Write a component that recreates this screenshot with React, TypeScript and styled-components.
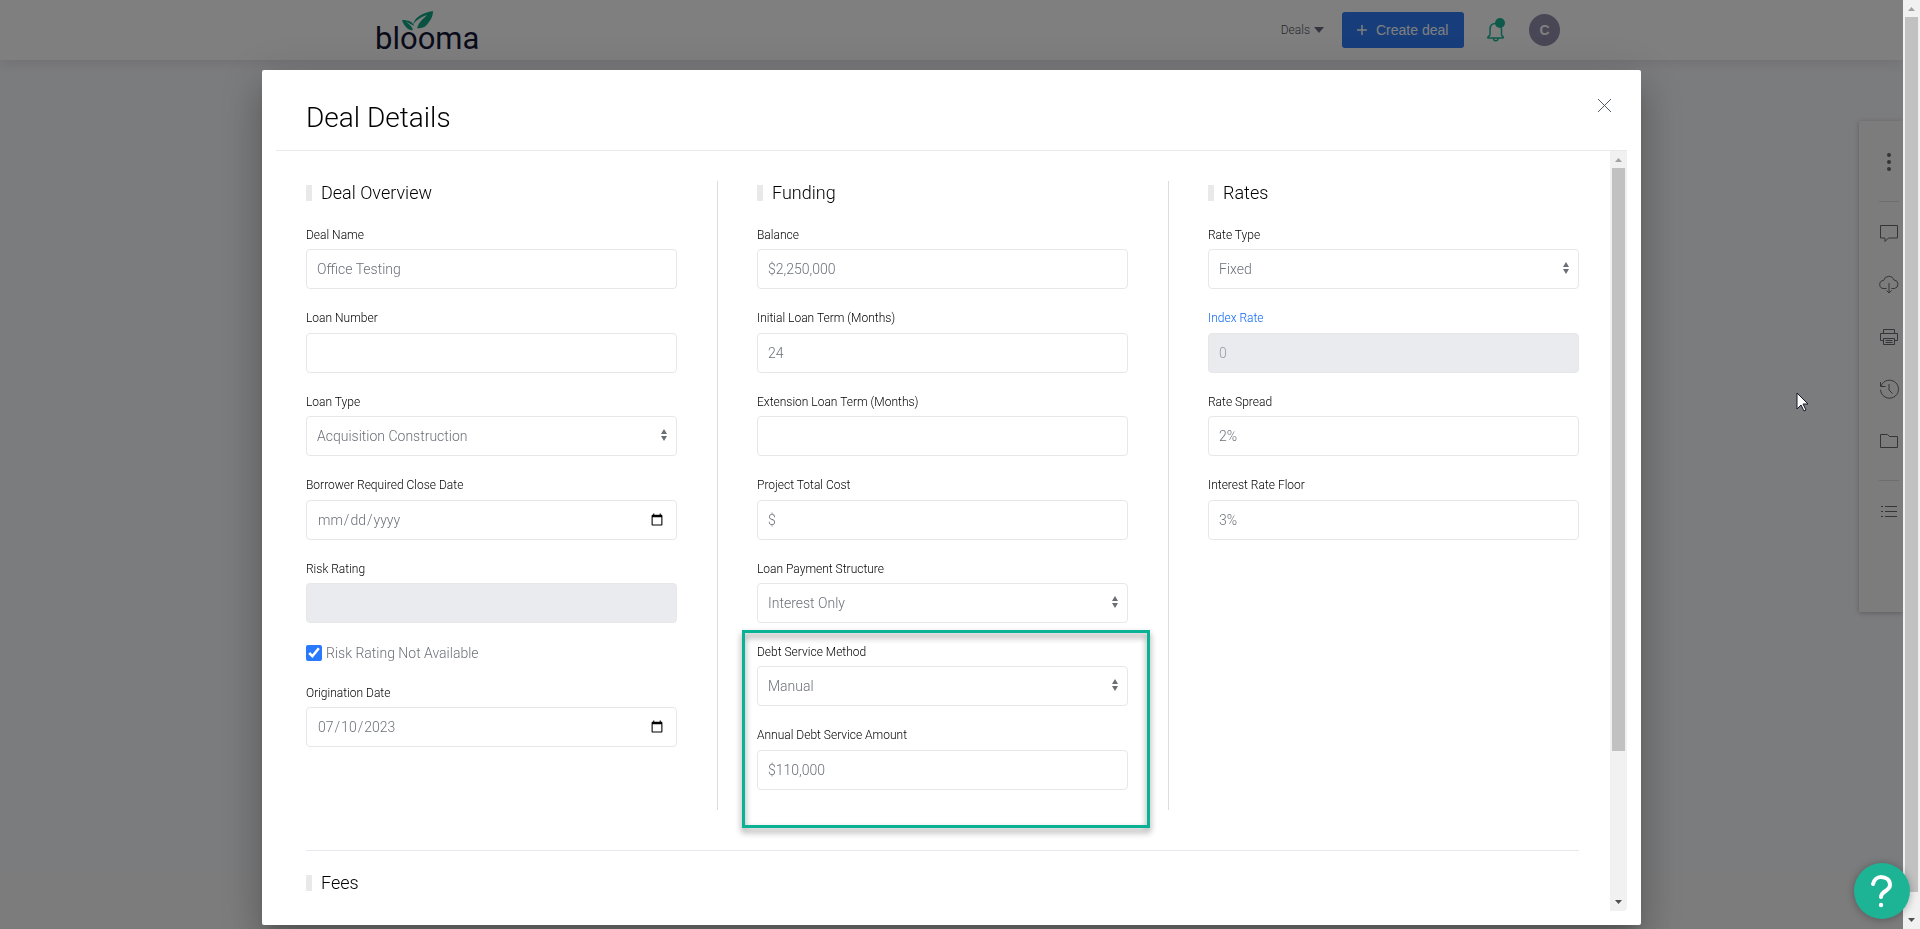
import React, { useId } from 'react';
import styled, { createGlobalStyle } from 'styled-components';

const GlobalStyle = createGlobalStyle`
  * { box-sizing: border-box; }
  body {
    margin: 0;
    background: #f7f8fb;
    color: #000;
    font-family: Roboto, "Liberation Sans", sans-serif;
    font-weight: 300;
    overflow: hidden;
  }
`;

const Shell = styled.div`
  display: flex;
  height: 100vh;
`;

const Page = styled.div`
  flex: 1;
  min-width: 0;
  display: flex;
  flex-direction: column;
`;

const TopBar = styled.header`
  height: 60px;
  background: #fff;
  box-shadow: 0 1px 12px rgba(60, 60, 90, 0.16);
`;

const TopBarInner = styled.div`
  max-width: 1217px;
  height: 60px;
  margin: 0 auto;
  padding-left: 32px;
  display: flex;
  align-items: center;
`;

const Logo = styled.a`
  position: relative;
  margin-right: auto;
  color: #141735;
  font-family: Roboto, "Liberation Sans", sans-serif;
  font-size: 31px;
  line-height: 36px;
  font-weight: 400;
  text-decoration: none;
  padding-top: 18px;

  svg {
    position: absolute;
    left: 27px;
    top: 7px;
  }
`;

const NavMenu = styled.button`
  display: flex;
  align-items: center;
  gap: 4px;
  border: 0;
  padding: 0;
  margin-right: 18px;
  background: none;
  color: #55555e;
  font: 300 12px Roboto, sans-serif;
`;

const CreateButton = styled.button`
  display: flex;
  align-items: center;
  gap: 9px;
  width: 122px;
  height: 36px;
  padding: 0 15px;
  border: 0;
  border-radius: 3px;
  background: #2e7af6;
  color: #fff;
  font: 400 14px "Liberation Sans", sans-serif;
  white-space: nowrap;
`;

const BellButton = styled.button`
  border: 0;
  padding: 0;
  margin: 0 24px 0 23px;
  width: 18px;
  height: 24px;
  background: none;
`;

const Avatar = styled.button`
  width: 31px;
  height: 32px;
  border: 0;
  padding: 0;
  border-radius: 50%;
  background: #928eaa;
  color: #fff;
  font: 700 14px "Liberation Sans", sans-serif;
`;

const Main = styled.main`
  flex: 1;
  display: flex;
  justify-content: flex-end;
  align-items: flex-start;
  padding-top: 61px;
`;

const ToolRail = styled.nav`
  width: 44px;
  height: 491px;
  padding: 31px 4px 0 20px;
  display: flex;
  flex-direction: column;
  gap: 31px;
  background: #f9f9f9;
  box-shadow: 0 1px 5px rgba(40, 40, 60, 0.3);
`;

const RailGroup = styled.div`
  display: flex;
  flex-direction: column;
  gap: 32px;

  & + & {
    border-top: 1px solid #dcdce2;
    padding-top: 21px;
    margin-top: -2px;
  }
`;

const RailButton = styled.button`
  width: 20px;
  height: 20px;
  border: 0;
  padding: 0;
  background: none;

  svg { display: block; }
`;

const Footer = styled.footer`
  height: 57px;
  background: #f8f8f8;
`;

const Overlay = styled.div`
  position: fixed;
  inset: 0 17px 0 0;
  display: flex;
  justify-content: center;
  align-items: flex-start;
  padding: 70px 24px 4px;
  background: rgba(0, 0, 0, 0.5);
`;

const Dialog = styled.section`
  display: flex;
  flex-direction: column;
  width: 100%;
  max-width: 1379px;
  height: 100%;
  padding: 0 14px 14px;
  border-radius: 2px;
  background: #fff;
  box-shadow: 0 11px 15px -7px rgba(0, 0, 0, 0.2), 0 24px 38px 3px rgba(0, 0, 0, 0.14),
    0 9px 46px 8px rgba(0, 0, 0, 0.12);
`;

const DialogHeader = styled.header`
  display: flex;
  justify-content: space-between;
  align-items: flex-start;
  height: 81px;
  padding: 28px 14px 0 30px;
  border-bottom: 1px solid #e9e9e9;
`;

const DialogTitle = styled.h1`
  margin: 0;
  font-size: 28px;
  line-height: 40px;
  font-weight: 300;
`;

const CloseButton = styled.button`
  width: 16px;
  height: 16px;
  border: 0;
  padding: 0;
  background: none;

  svg { display: block; }
`;

const DialogBody = styled.div`
  flex: 1;
  min-height: 0;
  display: flex;
`;

const ScrollArea = styled.div`
  flex: 1;
  min-width: 0;
  overflow-y: auto;
  scrollbar-width: none;
  padding: 30px 31px 30px 30px;
`;

const Columns = styled.div`
  display: flex;
  gap: 40px;
`;

const Column = styled.section`
  flex: 1;
  min-width: 0;
  display: flex;
  flex-direction: column;
  gap: 22px;
  padding-bottom: 20px;
`;

const ColumnRule = styled.div`
  width: 1px;
  margin-right: -1px;
  background: #dcdcdc;
`;

const SectionRule = styled.hr`
  margin: 40px 0 20px;
  border: 0;
  border-top: 1px solid #e7e7ee;
`;

const SectionTitle = styled.h2`
  display: flex;
  align-items: center;
  gap: 9px;
  margin: 0 0 1px;
  font-size: 18px;
  line-height: 24px;
  font-weight: 300;

  &::before {
    content: "";
    width: 6px;
    height: 16px;
    background: #e9e9e9;
  }
`;

const FieldBox = styled.div`
  display: flex;
  flex-direction: column;
  gap: 7px;
`;

const Label = styled.label<{ $link?: boolean }>`
  font-size: 12px;
  line-height: 1.2;
  color: ${(p) => (p.$link ? '#0d68f5' : '#000')};
`;

const TextInput = styled.input`
  width: 100%;
  height: 40px;
  padding: 0 10px;
  border: 1px solid #e7e7ea;
  border-radius: 4px;
  background: #fff;
  color: #6c7079;
  font: 300 14px Roboto, sans-serif;
  outline: 0;

  &:disabled {
    background: #eaebef;
    color: #989ba3;
  }
`;

const SelectBox = styled.div`
  position: relative;

  svg {
    position: absolute;
    right: 10px;
    top: 13px;
    pointer-events: none;
  }
`;

const SelectInput = styled(TextInput).attrs({ as: 'select' })`
  appearance: none;
`;

const CheckRow = styled.label`
  display: flex;
  align-items: center;
  gap: 4px;
  height: 16px;
  margin-bottom: 3px;
  color: #6c7079;
  font-size: 14px;
  line-height: 16px;

  input {
    width: 16px;
    height: 16px;
    margin: 0;
    accent-color: #2979ff;
  }
`;

const Highlight = styled.div`
  position: relative;
  display: flex;
  flex-direction: column;
  gap: 22px;

  &::after {
    content: "";
    position: absolute;
    inset: -15px -22px -38px -15px;
    border: 3px solid #09b294;
    filter: drop-shadow(0 4px 3px rgba(0, 0, 0, 0.45));
    pointer-events: none;
  }
`;

const Track = styled.div<{ $end: number }>`
  width: 17px;
  flex: none;
  display: flex;
  flex-direction: column;
  align-items: center;
  background: #f1f1f1;
  border-bottom-right-radius: ${(p) => p.$end}px;
`;

const TrackArrow = styled.svg`
  display: block;
  width: 17px;
  height: 17px;
  flex: none;
`;

const Thumb = styled.div<{ $size: number }>`
  width: 13px;
  flex: ${(p) => p.$size};
  background: #c1c1c1;
`;

const TrackRest = styled.div<{ $size: number }>`
  flex: ${(p) => p.$size};
`;

const HelpButton = styled.button`
  position: fixed;
  right: 10px;
  bottom: 10px;
  width: 56px;
  height: 56px;
  border: 0;
  padding: 0;
  border-radius: 50%;
  background: #1cb495;
  box-shadow: 0 1px 8px rgba(0, 0, 0, 0.3);

  svg { display: block; }
`;

const Pointer = styled.svg`
  position: fixed;
  right: 110px;
  top: 392px;
`;

function ScrollTrack({ thumb, rest, radius = 0 }: { thumb: number; rest: number; radius?: number }) {
  return (
    <Track $end={radius} aria-hidden="true">
      <TrackArrow viewBox="0 0 17 17">
        <path d="M5 11h7L8.500 7z" fill="#a3a3a3" />
      </TrackArrow>
      <Thumb $size={thumb} />
      <TrackRest $size={rest} />
      <TrackArrow viewBox="0 0 17 17">
        <path d="M5 6h7L8.500 10z" fill="#505050" />
      </TrackArrow>
    </Track>
  );
}

interface FieldProps {
  label: string;
  value?: string;
  type?: string;
  disabled?: boolean;
  link?: boolean;
}

function Field({ label, value = '', type = 'text', disabled, link }: FieldProps) {
  const id = useId();
  return (
    <FieldBox>
      <Label htmlFor={id} $link={link}>{label}</Label>
      <TextInput id={id} type={type} defaultValue={value} disabled={disabled} />
    </FieldBox>
  );
}

function SelectField({ label, value }: { label: string; value: string }) {
  const id = useId();
  return (
    <FieldBox>
      <Label htmlFor={id}>{label}</Label>
      <SelectBox>
        <SelectInput id={id}>
          <option>{value}</option>
        </SelectInput>
        <svg width="6" height="12" viewBox="0 0 6 12" fill="#6a6e76" aria-hidden="true">
          <path d="M0 5h6L3 0zM0 7h6L3 12z" />
        </svg>
      </SelectBox>
    </FieldBox>
  );
}

const railIcons = {
  comment: <path d="M1.500 2.500h17v12.500h-9l-3.500 3.500v-3.500h-4.500z" />,
  cloud: (
    <path d="M7.500 13.500H5a4 4 0 0 1-.5-8 5.500 5.500 0 0 1 10.500-.5 4.300 4.300 0 0 1 .5 8.500h-3M10 8v9.500M7.500 15.500l2.500 2.500 2.500-2.500" />
  ),
  print: <path d="M4.500 6.500v-4h11v4M4.500 13.500h-3v-7h17v7h-3M4.500 11.500h11v6h-11zM6.500 13.500h7M6.500 15.500h7" />,
  history: <path d="M1.500 3v4.500h5M2 7.200a9 9 0 1 1-.5 3.500M10 5v6l3.500 3.500" />,
  folder: <path d="M1.500 16.500v-13h7l2 2h8v11z" />,
  list: <path d="M2 4.500h2M6 4.500h12M2 9.500h2M6 9.500h12M2 14.500h2M6 14.500h12" />,
};

function RailIcon({ name, label }: { name: keyof typeof railIcons; label: string }) {
  return (
    <RailButton aria-label={label}>
      <svg width="20" height="20" viewBox="0 0 20 20" fill="none" stroke="#6a6a72">
        {railIcons[name]}
      </svg>
    </RailButton>
  );
}

export default function App() {
  return (
    <>
      <GlobalStyle />
      <Shell>
        <Page>
          <TopBar>
            <TopBarInner>
              <Logo href="#">
                blooma
                <svg width="32" height="22" viewBox="0 0 32 22" fill="#12a583" aria-hidden="true">
                  <path d="M31 1C21 3 13 6 11 15c3-5 8-8 14-10-4 4-8 7-10 13 5 1 9-1 12-6 3-4 4-7 4-11z" />
                  <path d="M0 10c7 0 11 2 12 6-3-2-5-3-8-4 3 2 6 4 7 8-5 1-9-4-11-10z" />
                </svg>
              </Logo>
              <NavMenu>
                Deals
                <svg width="10" height="6" viewBox="0 0 10 6" fill="#6b6880" aria-hidden="true">
                  <path d="M0 0h10L5 6z" />
                </svg>
              </NavMenu>
              <CreateButton>
                <svg width="10" height="10" viewBox="0 0 10 10" stroke="#fff" strokeWidth="1.500" aria-hidden="true">
                  <path d="M5 0v10M0 5h10" />
                </svg>
                Create deal
              </CreateButton>
              <BellButton aria-label="Notifications">
                <svg width="18" height="24" viewBox="0 0 18 24" fill="none" stroke="#1cb495" strokeWidth="1.500" aria-hidden="true">
                  <path d="M3 17.500v-6C3 8 5 5.500 8.500 5.500s6 2.500 6 6v6M3 17.500c-2 1-2.500 2-2 2.500h15c.5-.5.500-1.500-1.500-2.500M6.500 20.500c0 3 4.500 3 4.500 0" />
                  <circle cx="13" cy="5" r="5" fill="#1cb495" stroke="none" />
                </svg>
              </BellButton>
              <Avatar>C</Avatar>
            </TopBarInner>
          </TopBar>
          <Main>
            <ToolRail>
              <RailGroup>
                <RailButton aria-label="More">
                  <svg width="20" height="20" viewBox="0 0 20 20" fill="#6a6a72">
                    <circle cx="10" cy="3" r="2" />
                    <circle cx="10" cy="10" r="2" />
                    <circle cx="10" cy="17" r="2" />
                  </svg>
                </RailButton>
              </RailGroup>
              <RailGroup>
                <RailIcon name="comment" label="Comments" />
                <RailIcon name="cloud" label="Download" />
                <RailIcon name="print" label="Print" />
                <RailIcon name="history" label="History" />
                <RailIcon name="folder" label="Files" />
              </RailGroup>
              <RailGroup>
                <RailIcon name="list" label="Contents" />
              </RailGroup>
            </ToolRail>
          </Main>
          <Footer />
        </Page>
        <ScrollTrack thumb={875} rest={20} />
      </Shell>
      <Overlay>
        <Dialog role="dialog" aria-labelledby="dialog-title">
          <DialogHeader>
            <DialogTitle id="dialog-title">Deal Details</DialogTitle>
            <CloseButton aria-label="Close">
              <svg width="16" height="16" viewBox="0 0 16 16" stroke="#555b63" aria-hidden="true">
                <path d="M1 1l13 13M14 1L1 14" />
              </svg>
            </CloseButton>
          </DialogHeader>
          <DialogBody>
            <ScrollArea>
              <Columns>
                <Column>
                  <SectionTitle>Deal Overview</SectionTitle>
                  <Field label="Deal Name" value="Office Testing" />
                  <Field label="Loan Number" />
                  <SelectField label="Loan Type" value="Acquisition Construction" />
                  <Field label="Borrower Required Close Date" type="date" />
                  <Field label="Risk Rating" disabled />
                  <CheckRow>
                    <input type="checkbox" defaultChecked />
                    Risk Rating Not Available
                  </CheckRow>
                  <Field label="Origination Date" type="date" value="2023-07-10" />
                </Column>
                <ColumnRule />
                <Column>
                  <SectionTitle>Funding</SectionTitle>
                  <Field label="Balance" value="$2,250,000" />
                  <Field label="Initial Loan Term (Months)" value="24" />
                  <Field label="Extension Loan Term (Months)" />
                  <Field label="Project Total Cost" value="$" />
                  <SelectField label="Loan Payment Structure" value="Interest Only" />
                  <Highlight>
                    <SelectField label="Debt Service Method" value="Manual" />
                    <Field label="Annual Debt Service Amount" value="$110,000" />
                  </Highlight>
                </Column>
                <ColumnRule />
                <Column>
                  <SectionTitle>Rates</SectionTitle>
                  <SelectField label="Rate Type" value="Fixed" />
                  <Field label="Index Rate" value="0" disabled link />
                  <Field label="Rate Spread" value="2%" />
                  <Field label="Interest Rate Floor" value="3%" />
                </Column>
              </Columns>
              <SectionRule />
              <SectionTitle>Fees</SectionTitle>
            </ScrollArea>
            <ScrollTrack thumb={583} rest={143} radius={4} />
          </DialogBody>
        </Dialog>
      </Overlay>
      <HelpButton aria-label="Help">
        <svg width="56" height="56" viewBox="0 0 56 56" fill="none" stroke="#fff" strokeWidth="4" strokeLinecap="round" aria-hidden="true">
          <path d="M19 21c1-4 4-7 8-7 5 0 9 3 9 8 0 6-9 6-9 12" />
          <circle cx="27" cy="42" r="2.200" fill="#fff" stroke="none" />
        </svg>
      </HelpButton>
      <Pointer width="14" height="21" viewBox="0 0 14 21" fill="#fff" stroke="#16162a" aria-hidden="true">
        <path d="M1 1v16l4-4 3 6 2-1-3-6h5z" />
      </Pointer>
    </>
  );
}
